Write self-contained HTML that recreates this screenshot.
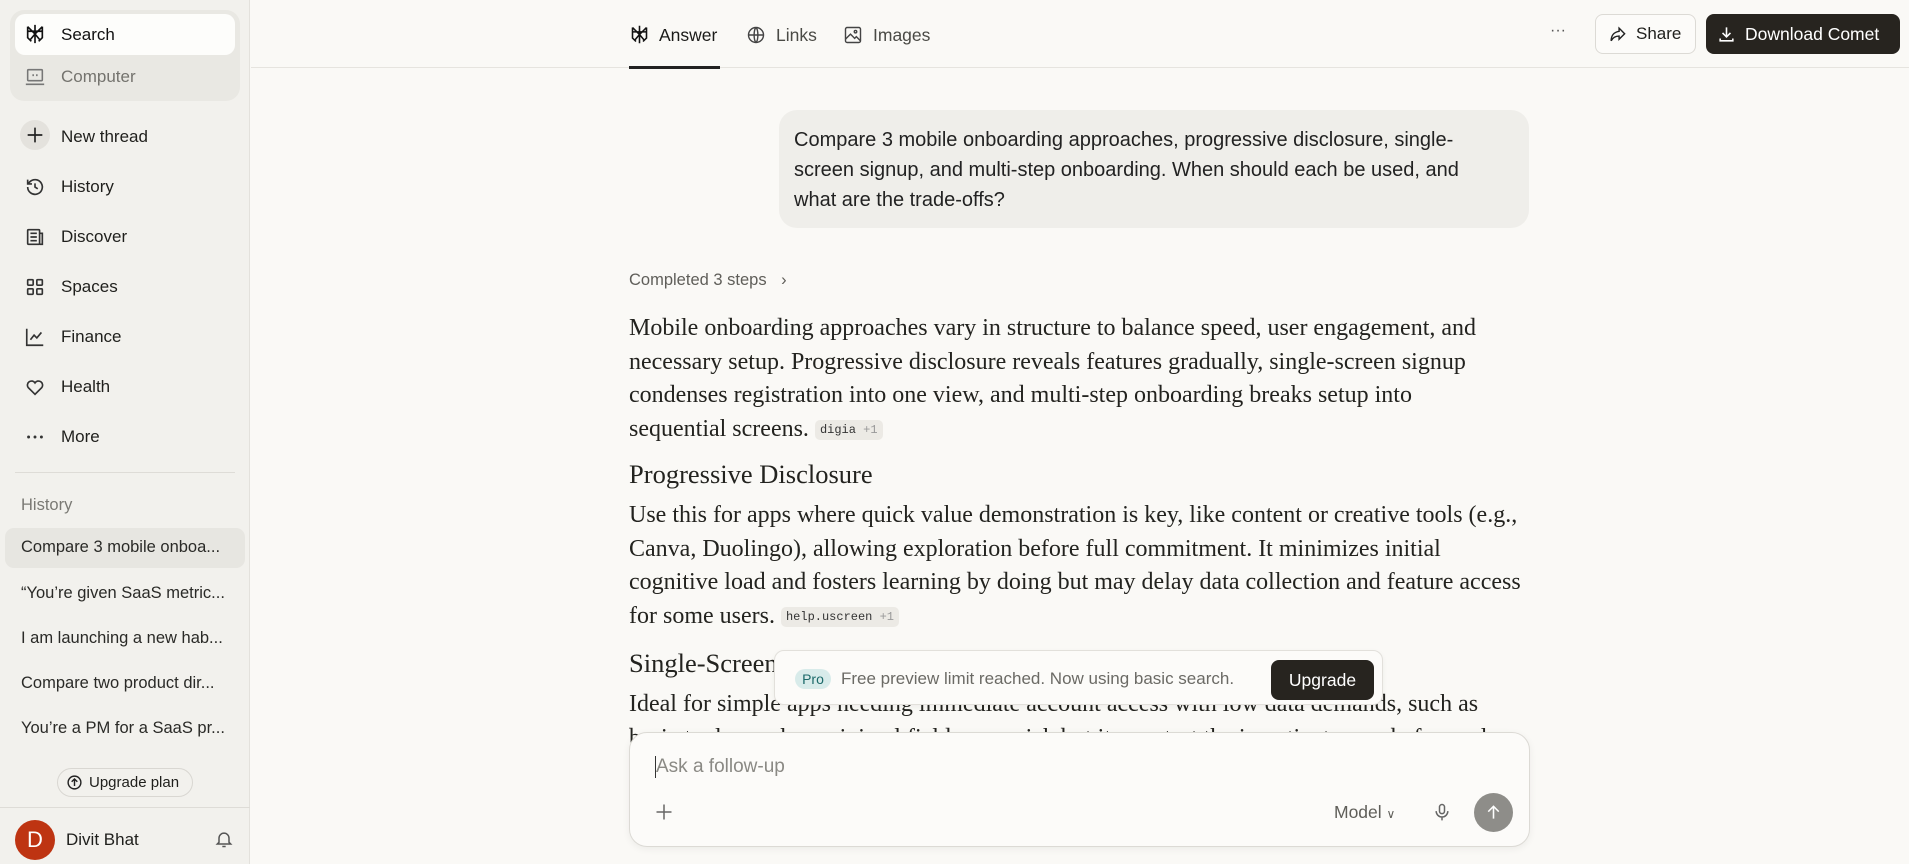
<!DOCTYPE html>
<html><head><meta charset="utf-8"><style>
*{box-sizing:border-box;margin:0;padding:0}
body{width:1909px;height:864px;overflow:hidden;background:#faf9f6;font-family:"Liberation Sans",sans-serif;color:#1f1f1c;position:relative}
.sb{position:absolute;left:0;top:0;width:250px;height:864px;background:#f2f1ed;border-right:1px solid #e3e1dc}
.grp{position:absolute;left:10px;top:10px;width:230px;height:91px;background:#e9e8e3;border-radius:14px}
.pill{position:absolute;left:15px;top:14px;width:220px;height:41px;background:#fdfdfb;border-radius:10px}
.it{position:absolute;left:61px;font-size:17px;line-height:20px;white-space:nowrap}
.ic{position:absolute;left:24px;width:22px;height:22px}
.hist{position:absolute;left:21px;font-size:16.5px;color:#2a2a27;white-space:nowrap}
.tab{position:absolute;top:25px;font-size:17.5px;color:#4a4a45;white-space:nowrap}
.ser{font-family:"Liberation Serif",serif;font-size:24px;color:#23231f;white-space:nowrap;position:absolute;left:629px}
.cite{display:inline-block;font-family:"Liberation Mono",monospace;font-size:12px;line-height:14px;background:#eceae5;border-radius:5px;padding:3px 5px;color:#333;vertical-align:3px}
.cite span{color:#999}
</style></head><body>
<div class="sb">
 <div class="grp"></div><div class="pill"></div>
 <svg class="ic" style="top:23px" viewBox="0 0 24 24" fill="none" stroke="#111" stroke-width="1.8"><path d="M12 2v20M4 4l8 8 8-8M4 9h16v7l-4 4M4 9v7l4 4M12 12l-5 6M12 12l5 6M4 4v5M20 4v5"/></svg>
 <div class="it" style="top:25px;color:#111">Search</div>
 <svg class="ic" style="top:66px" viewBox="0 0 24 24" fill="none" stroke="#777" stroke-width="1.7"><rect x="4" y="4" width="16" height="12" rx="1"/><path d="M2 20h20M10 9v2M14 9v2"/></svg>
 <div class="it" style="top:67px;color:#74736e">Computer</div>
 <div style="position:absolute;left:20px;top:120px;width:30px;height:30px;border-radius:50%;background:#e4e2dd"></div>
 <svg class="ic" style="top:124px" viewBox="0 0 24 24" stroke="#222" stroke-width="1.8"><path d="M12 4v16M4 12h16"/></svg>
 <div class="it" style="top:127px">New thread</div>
 <svg class="ic" style="top:176px" viewBox="0 0 24 24" fill="none" stroke="#333" stroke-width="1.8"><path d="M4 12a8 8 0 1 0 2.3-5.6L4 8.7M4 4v4.7h4.7M12 8v4l3 2"/></svg>
 <div class="it" style="top:177px">History</div>
 <svg class="ic" style="top:226px" viewBox="0 0 24 24" fill="none" stroke="#333" stroke-width="1.8"><rect x="4" y="4" width="13" height="16" rx="1"/><path d="M17 8h3v12h-3M7 8h7M7 12h7M7 16h7"/></svg>
 <div class="it" style="top:227px">Discover</div>
 <svg class="ic" style="top:276px" viewBox="0 0 24 24" fill="none" stroke="#333" stroke-width="1.8"><rect x="4" y="4" width="6" height="6" rx="1"/><rect x="14" y="4" width="6" height="6" rx="1"/><rect x="4" y="14" width="6" height="6" rx="1"/><rect x="14" y="14" width="6" height="6" rx="1"/></svg>
 <div class="it" style="top:277px">Spaces</div>
 <svg class="ic" style="top:326px" viewBox="0 0 24 24" fill="none" stroke="#333" stroke-width="1.8"><path d="M3 3v18h18M7 15l4-5 3 3 5-6"/></svg>
 <div class="it" style="top:327px">Finance</div>
 <svg class="ic" style="top:376px" viewBox="0 0 24 24" fill="none" stroke="#333" stroke-width="1.8"><path d="M12 20l-7.5-7.5a4.5 4.5 0 0 1 7.5-5 4.5 4.5 0 0 1 7.5 5z"/></svg>
 <div class="it" style="top:377px">Health</div>
 <svg class="ic" style="top:426px" viewBox="0 0 24 24" fill="#333"><circle cx="5" cy="12" r="1.6"/><circle cx="12" cy="12" r="1.6"/><circle cx="19" cy="12" r="1.6"/></svg>
 <div class="it" style="top:427px">More</div>
 <div style="position:absolute;left:15px;width:220px;top:472px;border-top:1px solid #dedcd7"></div>
 <div class="hist" style="top:496px;color:#7a7974">History</div>
 <div style="position:absolute;left:5px;top:528px;width:240px;height:40px;background:#e7e6e1;border-radius:9px"></div>
 <div class="hist" style="top:538px">Compare 3 mobile onboa...</div>
 <div class="hist" style="top:584px">“You’re given SaaS metric...</div>
 <div class="hist" style="top:629px">I am launching a new hab...</div>
 <div class="hist" style="top:674px">Compare two product dir...</div>
 <div class="hist" style="top:719px">You’re a PM for a SaaS pr...</div>
 <div style="position:absolute;left:57px;top:768px;width:136px;height:29px;border:1px solid #d9d7d2;border-radius:15px;font-size:15px;line-height:27px;padding-left:31px">Upgrade plan</div>
 <svg style="position:absolute;left:66px;top:774px" width="17" height="17" viewBox="0 0 24 24" fill="none" stroke="#222" stroke-width="2"><circle cx="12" cy="12" r="9"/><path d="M12 17V8M8 11l4-4 4 4"/></svg>
 <div style="position:absolute;left:0;width:250px;top:807px;border-top:1px solid #dedcd7"></div>
 <div style="position:absolute;left:15px;top:820px;width:40px;height:40px;border-radius:50%;background:#be3412;color:#fff;font-size:22px;line-height:40px;text-align:center">D</div>
 <div class="it" style="left:66px;top:830px">Divit Bhat</div>
 <svg style="position:absolute;left:214px;top:829px" width="20" height="20" viewBox="0 0 24 24" fill="none" stroke="#555" stroke-width="1.8"><path d="M6 16V11a6 6 0 0 1 12 0v5l2 2H4zM10 21h4"/></svg>
</div>
<div style="position:absolute;left:251px;right:0;top:0;height:68px;border-bottom:1px solid #e6e4df"></div>
<svg style="position:absolute;left:629px;top:24px" width="21" height="21" viewBox="0 0 24 24" fill="none" stroke="#111" stroke-width="1.8"><path d="M12 2v20M4 4l8 8 8-8M4 9h16v7l-4 4M4 9v7l4 4M12 12l-5 6M12 12l5 6M4 4v5M20 4v5"/></svg>
<div class="tab" style="left:659px;color:#1a1a18">Answer</div>
<div style="position:absolute;left:629px;top:66px;width:91px;height:3px;background:#222"></div>
<svg style="position:absolute;left:746px;top:25px" width="20" height="20" viewBox="0 0 24 24" fill="none" stroke="#444" stroke-width="1.7"><circle cx="12" cy="12" r="9"/><path d="M3 12h18M12 3c3 3 3 15 0 18M12 3c-3 3-3 15 0 18"/></svg>
<div class="tab" style="left:776px">Links</div>
<svg style="position:absolute;left:843px;top:25px" width="20" height="20" viewBox="0 0 24 24" fill="none" stroke="#444" stroke-width="1.7"><rect x="3" y="3" width="18" height="18" rx="2"/><path d="M3 17l6-6 5 5 2-2 5 5"/><circle cx="15" cy="8" r="1.5"/></svg>
<div class="tab" style="left:873px">Images</div>
<div style="position:absolute;left:1550px;top:22px;font-size:16px;color:#555">···</div>
<div style="position:absolute;left:1595px;top:14px;width:101px;height:40px;border:1px solid #dcdad5;border-radius:8px;background:#fcfbf9;font-size:17px;line-height:38px;padding-left:40px">Share</div>
<svg style="position:absolute;left:1608px;top:25px" width="19" height="19" viewBox="0 0 24 24" fill="none" stroke="#222" stroke-width="1.8"><path d="M14 4l7 7-7 7v-4c-5 0-8 2-10 6 0-6 3-11 10-12z"/></svg>
<div style="position:absolute;left:1706px;top:14px;width:194px;height:40px;border-radius:8px;background:#27241f;color:#fff;font-size:17.5px;line-height:40px;padding-left:39px;white-space:nowrap">Download Comet</div>
<svg style="position:absolute;left:1717px;top:25px" width="19" height="19" viewBox="0 0 24 24" fill="none" stroke="#fff" stroke-width="2"><path d="M12 3v12M7 10l5 5 5-5M4 17v3h16v-3"/></svg>

<div style="position:absolute;left:779px;top:110px;width:750px;height:118px;background:#efeeea;border-radius:18px"></div>
<div style="position:absolute;left:794px;top:125px;font-size:20px;line-height:30px;color:#222;white-space:nowrap">Compare 3 mobile onboarding approaches, progressive disclosure, single-<br>screen signup, and multi-step onboarding. When should each be used, and<br>what are the trade-offs?</div>

<div style="position:absolute;left:629px;top:271px;font-size:16.5px;color:#5f5e59">Completed 3 steps <span style="margin-left:10px">›</span></div>

<div class="ser" style="top:312px;line-height:33.5px">Mobile onboarding approaches vary in structure to balance speed, user engagement, and<br>necessary setup. Progressive disclosure reveals features gradually, single-screen signup<br>condenses registration into one view, and multi-step onboarding breaks setup into<br>sequential screens. <span class="cite">digia <span>+1</span></span></div>
<div class="ser" style="top:459px;font-size:26.5px">Progressive Disclosure</div>
<div class="ser" style="top:499px;line-height:33.5px">Use this for apps where quick value demonstration is key, like content or creative tools (e.g.,<br>Canva, Duolingo), allowing exploration before full commitment. It minimizes initial<br>cognitive load and fosters learning by doing but may delay data collection and feature access<br>for some users. <span class="cite">help.uscreen <span>+1</span></span></div>
<div class="ser" style="top:648px;font-size:26.5px">Single-Screen Signup</div>
<div class="ser" style="top:688px;line-height:33.5px">Ideal for simple apps needing immediate account access with low data demands, such as<br>basic tools or when minimal fields are quick but it may test the impatient users before value</div>

<div style="position:absolute;left:774px;top:650px;width:609px;height:55px;background:#fcfbf9;border:1px solid #e2e0db;border-radius:10px;box-shadow:0 2px 6px rgba(0,0,0,.05)"></div>
<div style="position:absolute;left:795px;top:669px;width:36px;height:20px;border-radius:10px;background:#d8ebea;color:#1d6a6a;font-size:14px;line-height:20px;text-align:center">Pro</div>
<div style="position:absolute;left:841px;top:669px;font-size:17px;color:#6b6a65;white-space:nowrap">Free preview limit reached. Now using basic search.</div>
<div style="position:absolute;left:1271px;top:660px;width:103px;height:40px;border-radius:8px;background:#27241f;color:#fff;font-size:17.5px;line-height:40px;text-align:center">Upgrade</div>

<div style="position:absolute;left:629px;top:732px;width:901px;height:115px;background:#fcfbf9;border:1px solid #dcdad5;border-radius:18px;box-shadow:0 2px 8px rgba(0,0,0,.06)"></div>
<div style="position:absolute;left:655px;top:756px;width:1px;height:22px;background:#333"></div>
<div style="position:absolute;left:656px;top:756px;font-size:19px;color:#8a8984">Ask a follow-up</div>
<svg style="position:absolute;left:654px;top:802px" width="20" height="20" viewBox="0 0 24 24" stroke="#666" stroke-width="1.8"><path d="M12 3v18M3 12h18"/></svg>
<div style="position:absolute;left:1334px;top:802px;font-size:17.5px;color:#5f5e59">Model <span style="font-size:12px">∨</span></div>
<svg style="position:absolute;left:1432px;top:801px" width="20" height="22" viewBox="0 0 24 24" fill="none" stroke="#666" stroke-width="1.8"><rect x="9" y="3" width="6" height="11" rx="3"/><path d="M5 11a7 7 0 0 0 14 0M12 18v4"/></svg>
<div style="position:absolute;left:1474px;top:793px;width:39px;height:39px;border-radius:50%;background:#8e8d89"></div>
<svg style="position:absolute;left:1483px;top:802px" width="21" height="21" viewBox="0 0 24 24" fill="none" stroke="#fff" stroke-width="1.8"><path d="M12 19V5M6 11l6-6 6 6"/></svg>
</body></html>
